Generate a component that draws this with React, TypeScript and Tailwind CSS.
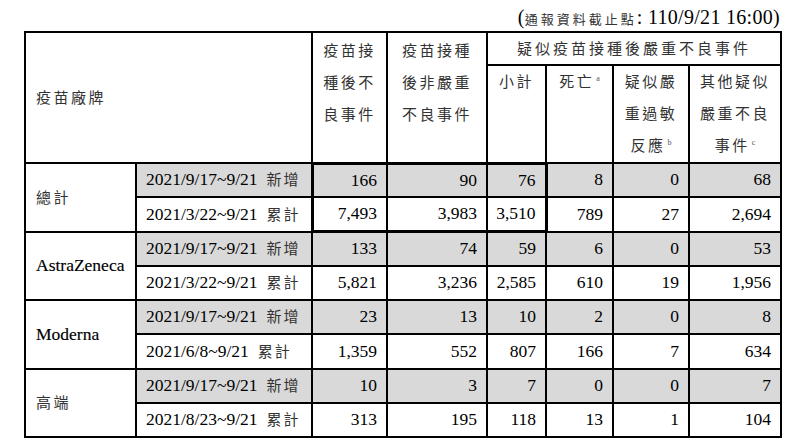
import React from 'react';

type Row = {
  period: string;
  label: string;
  values: string[];
  shaded: boolean;
};

type Brand = {
  name: string;
  cjk: boolean;
  rows: Row[];
};

const brands: Brand[] = [
  {
    name: '總計',
    cjk: true,
    rows: [
      { period: '2021/9/17~9/21', label: '新增', values: ['166', '90', '76', '8', '0', '68'], shaded: true },
      { period: '2021/3/22~9/21', label: '累計', values: ['7,493', '3,983', '3,510', '789', '27', '2,694'], shaded: false },
    ],
  },
  {
    name: 'AstraZeneca',
    cjk: false,
    rows: [
      { period: '2021/9/17~9/21', label: '新增', values: ['133', '74', '59', '6', '0', '53'], shaded: true },
      { period: '2021/3/22~9/21', label: '累計', values: ['5,821', '3,236', '2,585', '610', '19', '1,956'], shaded: false },
    ],
  },
  {
    name: 'Moderna',
    cjk: false,
    rows: [
      { period: '2021/9/17~9/21', label: '新增', values: ['23', '13', '10', '2', '0', '8'], shaded: true },
      { period: '2021/6/8~9/21', label: '累計', values: ['1,359', '552', '807', '166', '7', '634'], shaded: false },
    ],
  },
  {
    name: '高端',
    cjk: true,
    rows: [
      { period: '2021/9/17~9/21', label: '新增', values: ['10', '3', '7', '0', '0', '7'], shaded: true },
      { period: '2021/8/23~9/21', label: '累計', values: ['313', '195', '118', '13', '1', '104'], shaded: false },
    ],
  },
];

const cjk = 'text-[15px] tracking-[2.5px] text-[#333]';
const cell = 'border-2 border-black';

function Sup({ children }: { children: React.ReactNode }) {
  return <sup className="text-[8px] tracking-normal text-[#555] relative -top-[6px] ml-[2px]">{children}</sup>;
}

// thick outline around the first two rows of columns 3-5 (總計)
function boxClass(bi: number, ri: number, ci: number) {
  if (bi !== 0 || ci > 2) return '';
  let c = '';
  if (ri === 0) c += ' border-t-[3px]';
  if (ri === 1) c += ' border-b-[3px]';
  if (ci === 0) c += ' border-l-[3px]';
  if (ci === 2) c += ' border-r-[3px]';
  return c;
}

export default function App() {
  return (
    <div
      className="w-[800px] h-[445px] bg-white text-black overflow-hidden"
      style={{ fontFamily: "'Liberation Serif', 'Noto Sans CJK TC', serif" }}
    >
      <div className="w-[780px] pl-[24px]">
        <div className="h-[31px] pt-[6px] text-right text-[20px] leading-[22px] tracking-[0.3px] whitespace-nowrap">
          (<span className="text-[13px] tracking-[3px] text-[#333]">通報資料截止點</span>: 110/9/21 16:00)
        </div>
        <table className="w-[756px] table-fixed border-collapse">
          <colgroup>
            <col className="w-[111px]" />
            <col className="w-[176px]" />
            <col className="w-[75px]" />
            <col className="w-[100px]" />
            <col className="w-[59px]" />
            <col className="w-[67px]" />
            <col className="w-[76px]" />
            <col className="w-[92px]" />
          </colgroup>
          <thead>
            <tr className="h-[33px]">
              <th rowSpan={2} colSpan={2} className={`${cell} text-left font-normal align-middle pl-[10px]`}>
                <span className={cjk}>疫苗廠牌</span>
              </th>
              <th rowSpan={2} className={`${cell} font-normal align-top pt-[2px]`}>
                <div className={`${cjk} leading-[32px]`}>
                  疫苗接<br />種後不<br />良事件
                </div>
              </th>
              <th rowSpan={2} className={`${cell} font-normal align-top pt-[2px]`}>
                <div className={`${cjk} leading-[32px]`}>
                  疫苗接種<br />後非嚴重<br />不良事件
                </div>
              </th>
              <th colSpan={4} className={`${cell} font-normal align-middle`}>
                <span className={`${cjk} tracking-[3px]`}>疑似疫苗接種後嚴重不良事件</span>
              </th>
            </tr>
            <tr className="h-[97px]">
              <th className={`${cell} font-normal align-top`}>
                <div className={`${cjk} leading-[32px]`}>小計</div>
              </th>
              <th className={`${cell} font-normal align-top`}>
                <div className={`${cjk} leading-[32px]`}>
                  死亡<Sup>a</Sup>
                </div>
              </th>
              <th className={`${cell} font-normal align-top`}>
                <div className={`${cjk} leading-[32px]`}>
                  疑似嚴<br />重過敏<br />反應<Sup>b</Sup>
                </div>
              </th>
              <th className={`${cell} font-normal align-top`}>
                <div className={`${cjk} leading-[32px]`}>
                  其他疑似<br />嚴重不良<br />事件<Sup>c</Sup>
                </div>
              </th>
            </tr>
          </thead>
          <tbody className="text-[17.5px] leading-none">
            {brands.map((b, bi) =>
              b.rows.map((r, ri) => (
                <tr key={`${bi}-${ri}`} className="h-[34.25px]">
                  {ri === 0 && (
                    <td rowSpan={2} className={`${cell} pl-[10px] align-middle`}>
                      {b.cjk ? (
                        <span className={cjk}>{b.name}</span>
                      ) : (
                        <span className="[-webkit-text-stroke:0.15px_black]">{b.name}</span>
                      )}
                    </td>
                  )}
                  <td className={`${cell} pl-[9px] whitespace-nowrap ${r.shaded ? 'bg-[#d9d9d9]' : ''}`}>
                    {r.period}
                    <span className="ml-[9px] text-[15px] tracking-[2px] text-[#333]">{r.label}</span>
                  </td>
                  {r.values.map((v, ci) => (
                    <td
                      key={ci}
                      className={`${cell} text-right pr-[9px] ${r.shaded ? 'bg-[#d9d9d9]' : ''}${boxClass(bi, ri, ci)}`}
                    >
                      {v}
                    </td>
                  ))}
                </tr>
              ))
            )}
          </tbody>
        </table>
      </div>
    </div>
  );
}
